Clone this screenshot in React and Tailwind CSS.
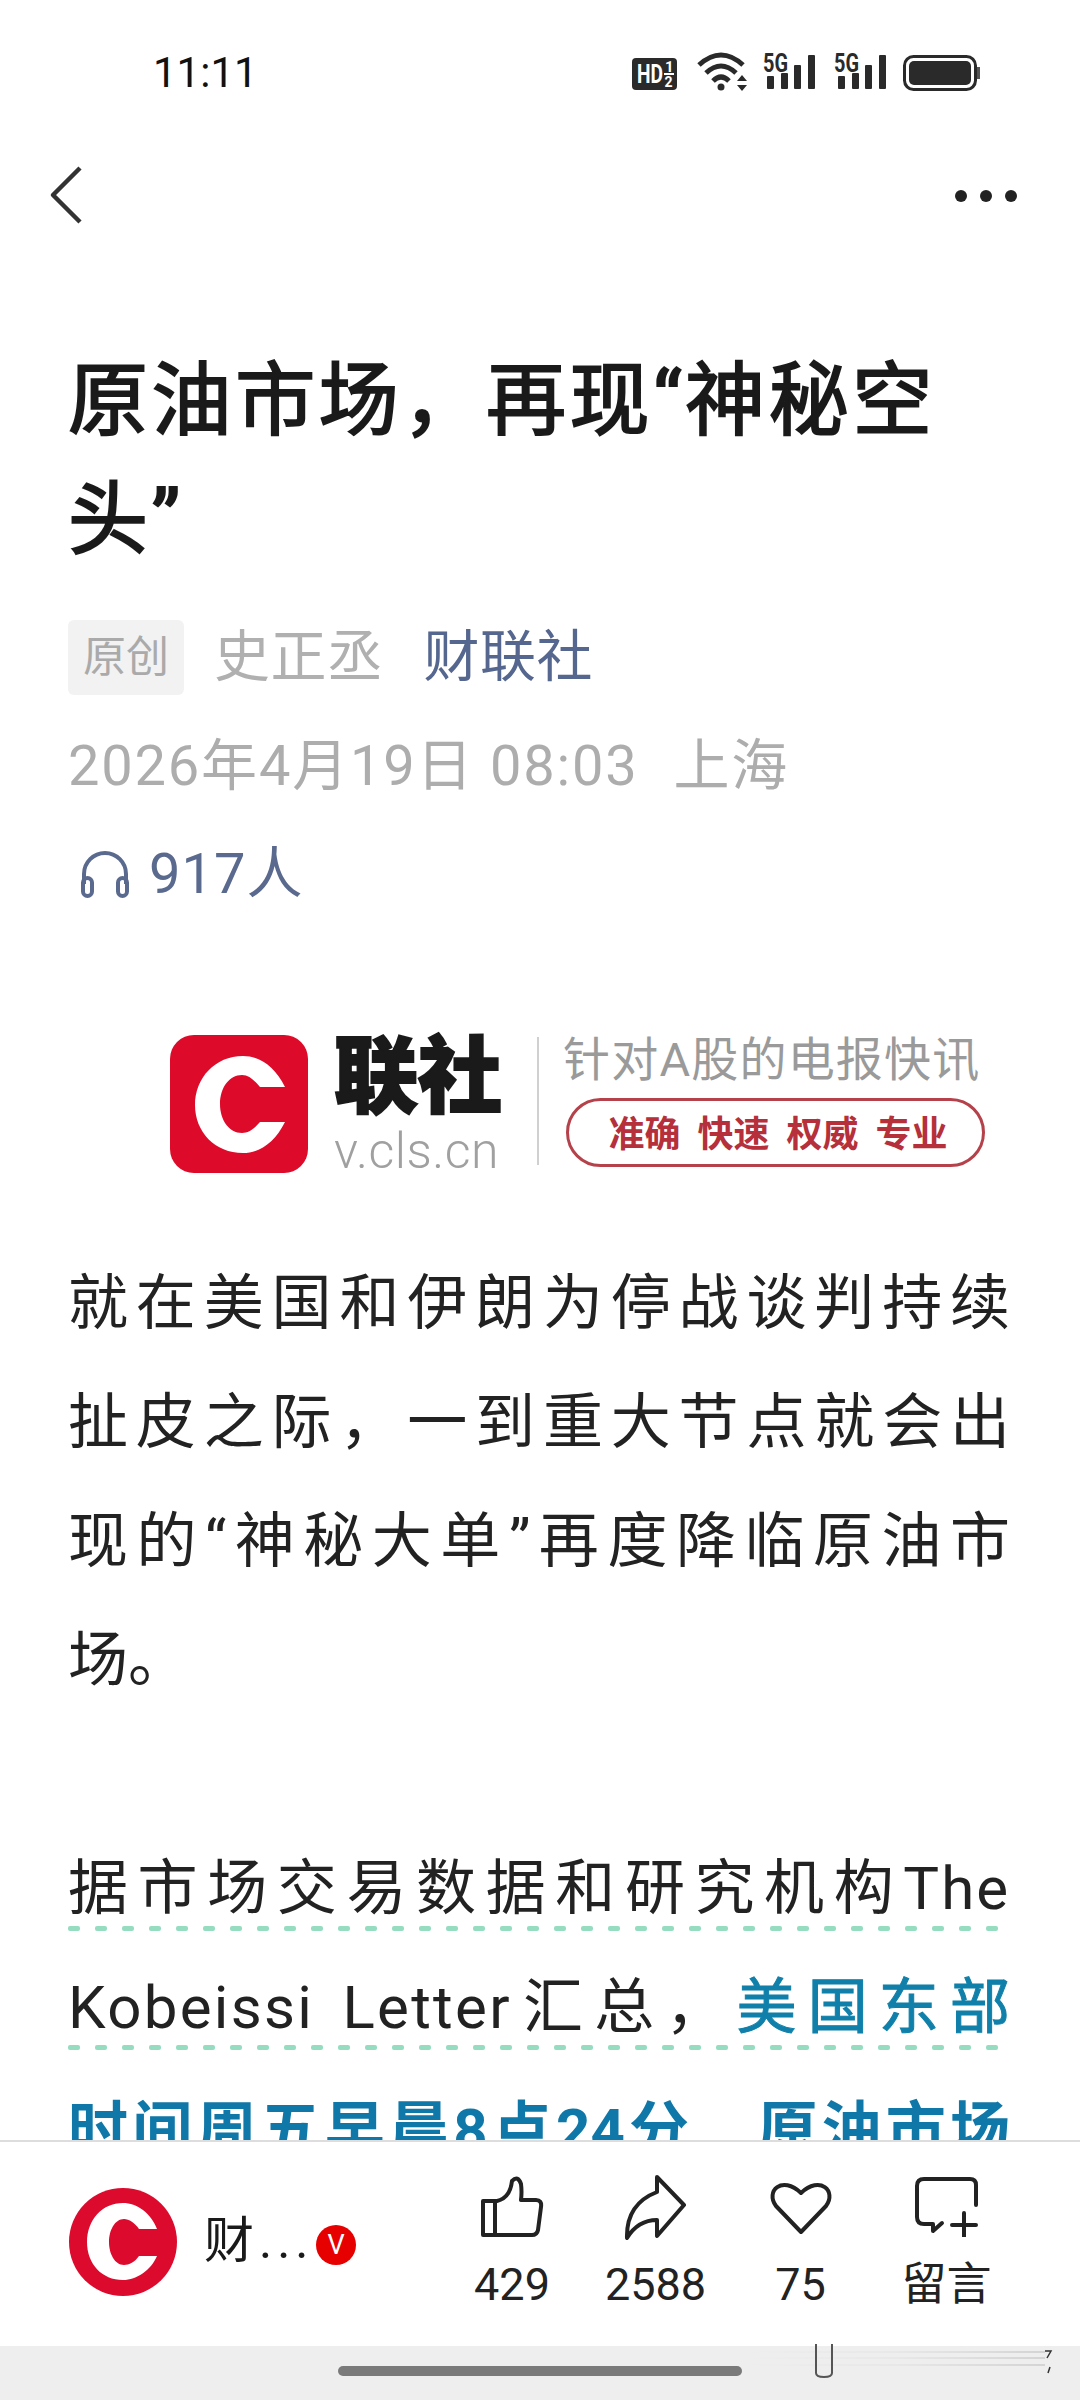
const F = '"Roboto","Noto Sans CJK SC",sans-serif';

function StatusIcons() {
  return (
    <svg width="350" height="44" viewBox="0 0 350 44" className="block">
      <rect x="2" y="8" width="45" height="32" rx="4" fill="#2a2a2a" />
      <text x="7" y="33" fontFamily="Roboto" fontWeight="700" fontSize="26" fill="#fff" textLength="26" lengthAdjust="spacingAndGlyphs">HD</text>
      <text x="35" y="22" fontFamily="Roboto" fontWeight="700" fontSize="15" fill="#fff">1</text>
      <rect x="34" y="23" width="10" height="2" fill="#fff" />
      <text x="34.5" y="37" fontFamily="Roboto" fontWeight="700" fontSize="14" fill="#fff">2</text>
      <g fill="none" stroke="#2a2a2a" strokeWidth="5">
        <path d="M69 15 Q91 -5 113 15" />
        <path d="M76 23 Q91 9 106 23" />
        <path d="M83 31 Q91 23 99 31" />
      </g>
      <circle cx="91" cy="37" r="3.5" fill="#2a2a2a" />
      <path d="M107 31h10l-5-6zM107 35h10l-5 6z" fill="#2a2a2a" />
      {[0, 71].map((dx) => (
        <g key={dx} transform={`translate(${dx} 0)`}>
          <text x="133" y="22" fontFamily="Roboto" fontWeight="700" fontSize="25" fill="#2a2a2a" textLength="25" lengthAdjust="spacingAndGlyphs">5G</text>
          <rect x="137" y="26" width="7" height="13" rx="1" fill="#2a2a2a" />
          <rect x="151" y="23" width="7" height="16" rx="1" fill="#2a2a2a" />
          <rect x="164" y="15" width="7" height="24" rx="1" fill="#2a2a2a" />
          <rect x="178" y="5" width="7" height="34" rx="1" fill="#2a2a2a" />
        </g>
      ))}
      <rect x="274.5" y="6.5" width="71" height="33" rx="9" fill="none" stroke="#2a2a2a" strokeWidth="3" />
      <rect x="279" y="11" width="62" height="24" rx="5" fill="#2a2a2a" />
      <rect x="347" y="17" width="3" height="12" fill="#555" />
    </svg>
  );
}

function Dashes({ n }) {
  return (
    <div className="absolute left-0 top-[97px] flex gap-[15px]">
      {Array.from({ length: n }).map((_, i) => (
        <span key={i} className="block w-[12px] h-[5px] rounded-[2px] bg-[#96dcc0]" />
      ))}
    </div>
  );
}

function Line({ children, dashed }) {
  return (
    <div className="relative h-[119px] flex items-center">
      <div className="w-[942px] whitespace-nowrap [text-align:justify] [text-align-last:justify]">{children}</div>
      {dashed && <Dashes n={dashed} />}
    </div>
  );
}

function BoxMark() {
  return (
    <svg viewBox="0 0 138 138" className="w-[138px] h-[138px] block shrink-0">
      <rect width="138" height="138" rx="24" fill="#dd0a2a" />
      <path
        fill="#fff"
        d="M115 52 C105 32 90 21 73 21 C45 21 25 43 25 70 C25 97 45 118 73 118 C90 118 105 107 115 87 L90 87 C84 94 79 98 72 98 C59 98 50 85 50 69 C50 53 59 40 72 40 C79 40 84 45 90 52 Z"
      />
    </svg>
  );
}

function RoundMark() {
  return (
    <svg viewBox="0 0 108 108" className="ml-[69px] mt-[46px] w-[108px] h-[108px] shrink-0">
      <circle cx="54" cy="54" r="54" fill="#dc0a2d" />
      <path
        fill="#fff"
        d="M88 41 C82 25 68 15 54 15 C33 15 18 32 18 54 C18 76 33 92 54 92 C68 92 82 82 88 68 L70 68 C66 74 60 77 55 77 C46 77 40 66 40 54 C40 42 46 31 55 31 C60 31 66 35 70 41 Z"
      />
    </svg>
  );
}

export default function App() {
  return (
    <div className="relative w-[1080px] h-[2400px] flex flex-col overflow-hidden bg-white" style={{ fontFamily: F }}>
      <main className="flex-1 min-h-0 overflow-hidden">
        <div className="h-[150px] pt-[50px] flex items-start justify-between pl-[153px] pr-[100px]">
          <span className="text-[42px] leading-[46px] text-[#111]">11:11</span>
          <StatusIcons />
        </div>

        <div className="flex items-center justify-between pl-[48px] pr-[63px] h-[90px]">
          <svg width="36" height="60" viewBox="0 0 36 60" fill="none" stroke="#333" strokeWidth="4.5" strokeLinejoin="round">
            <path d="M32 3 L5 30 L32 57" />
          </svg>
          <div className="flex gap-[13px] mt-[2px]">
            <span className="w-[12px] h-[12px] rounded-full bg-[#222]" />
            <span className="w-[12px] h-[12px] rounded-full bg-[#222]" />
            <span className="w-[12px] h-[12px] rounded-full bg-[#222]" />
          </div>
        </div>

        <h1 className="mt-[102px] pl-[68px] text-[80px] leading-[119px] font-normal text-[#1a1a1a] tracking-[3.6px] [-webkit-text-stroke:2px_#1a1a1a]">
          <div className="whitespace-nowrap">原油市场，再现“神秘空</div>
          <div>头”</div>
        </h1>

        <div className="mt-[39px] pl-[68px] flex items-center h-[76px]">
          <span className="w-[116px] h-[75px] rounded-[6px] bg-[#f2f2f2] text-[#aaaaaa] text-[43px] flex items-center justify-center">原创</span>
          <span className="ml-[30px] text-[56px] tracking-[0.5px] text-[#b0b0b0]">史正丞</span>
          <span className="ml-[40px] text-[56px] tracking-[0.5px] text-[#56678f]">财联社</span>
        </div>

        <div className="mt-[33px] pl-[68px] text-[56px] leading-[76px] tracking-[1.8px] text-[#adadad] whitespace-nowrap">
          2026年4月19日 08:03<span className="ml-[35px]">上海</span>
        </div>

        <div className="mt-[35px] pl-[80px] flex items-center gap-[19px] text-[56px] leading-[70px] tracking-[1px] text-[#5a6a8e]">
          <svg width="50" height="48" viewBox="0 0 50 48" fill="none" stroke="#5a6a8e" strokeWidth="4">
            <path d="M4 34 V24 A21 21 0 0 1 46 24 V34" />
            <rect x="3" y="28" width="9" height="18" rx="4.5" />
            <rect x="38" y="28" width="9" height="18" rx="4.5" />
          </svg>
          <span>917人</span>
        </div>

        <div className="mt-[126px] ml-[170px] flex h-[138px]">
          <BoxMark />
          <div className="ml-[26px] w-[172px] flex flex-col">
            <div className="text-[84px] leading-[86px] font-black text-[#1a1a1a] whitespace-nowrap [-webkit-text-stroke:2px_#1a1a1a]">联社</div>
            <div className="mt-[8px] text-[50px] leading-[44px] font-light tracking-[0.5px] text-[#a0a0a0] whitespace-nowrap">v.cls.cn</div>
          </div>
          <div className="ml-[31px] w-[2px] h-[128px] mt-[2px] bg-[#d0d0d0]" />
          <div className="ml-[24px] flex flex-col">
            <div className="text-[47px] leading-[50px] text-[#9a9a9a] tracking-[1.2px] whitespace-nowrap">针对A股的电报快讯</div>
            <div className="mt-[13px] ml-[3px] w-[419px] h-[69px] rounded-full border-[3px] border-[#b5414a] flex items-center justify-center gap-[17px] pl-[5px] pt-[4px] text-[36px] font-bold text-[#b5303a]">
              <span>准确</span><span>快速</span><span>权威</span><span>专业</span>
            </div>
          </div>
        </div>

        <article className="mt-[71px] pl-[68px] text-[60px] text-[#222]">
          <Line>就在美国和伊朗为停战谈判持续</Line>
          <Line>扯皮之际，一到重大节点就会出</Line>
          <Line>现的“神秘大单”再度降临原油市</Line>
          <div className="h-[119px] flex items-center">场。</div>
          <div className="h-[109px]" />
          <Line dashed={35}>据市场交易数据和研究机构<span className="tracking-[2px]">The</span></Line>
          <Line dashed={35}>
            <span className="tracking-[2.3px]">Kobeissi Letter</span>汇总，<span className="text-[#1080aa] [-webkit-text-stroke:1px_#1080aa]">美国东部</span>
          </Line>
          <div className="w-[942px] h-[119px] pt-[8px] flex items-center whitespace-nowrap [text-align-last:justify] font-bold text-[#1078a8]">
            <div className="w-full">时间周五早晨8点24分<span className="relative top-[16px]">，</span>原油市场</div>
          </div>
        </article>
      </main>

      <footer className="shrink-0 h-[206px] border-t-2 border-[#dddddd] bg-white flex items-start">
        <RoundMark />
        <span className="ml-[27px] mt-[64px] w-[112px] text-[50px] leading-[70px] text-[#1a1a1a] tracking-[5px] whitespace-nowrap">财...</span>
        <span className="mt-[83px] w-[40px] h-[40px] rounded-full bg-[#e60000] text-white text-[27px] leading-[40px] text-center">V</span>
        <div className="ml-[85px] mt-[32px] flex">
          <Action label="429" w="w-[142px]">
            <svg width="64" height="62" viewBox="0 0 64 62" fill="none" stroke="#222" strokeWidth="4" strokeLinejoin="round">
              <path d="M3 25 H17 Q30 22 32 5 Q38 -1 41 8 Q42 16 41 24 H56 Q62 24 61 31 L58 54 Q57 59 52 59 H3 Z" />
              <path d="M15 25 V59" />
            </svg>
          </Action>
          <Action label="2588" w="w-[145px]">
            <svg width="64" height="66" viewBox="0 0 64 66" fill="none" stroke="#222" strokeWidth="4" strokeLinejoin="round" strokeLinecap="round">
              <path d="M33 3 L60 31 L33 62 L33 46 Q14 46 3 64 Q2 30 33 18 Z" />
            </svg>
          </Action>
          <Action label="75" w="w-[145px]">
            <svg width="64" height="56" viewBox="0 0 64 56" fill="none" stroke="#222" strokeWidth="4" strokeLinejoin="round">
              <path d="M32 53 L7 27 C-4 12 13 -4 32 14 C51 -4 68 12 57 27 Z" />
            </svg>
          </Action>
          <Action label="留言" w="w-[147px]">
            <svg width="66" height="60" viewBox="0 0 66 60" fill="none" stroke="#222" strokeWidth="4" strokeLinecap="round" strokeLinejoin="round">
              <path d="M62 28 V8 Q62 2 56 2 H10 Q3 2 3 9 V40 Q3 47 10 47 H19 V54 L28 46" />
              <path d="M50 36 V60 M38 48 H62" />
            </svg>
          </Action>
        </div>
      </footer>

      <div className="shrink-0 h-[54px] bg-[#eeeeee] pt-[20px] pl-[338px] flex items-start">
        <div className="w-[404px] h-[10px] rounded-full bg-[#7a7a7a]" />
      </div>

      <svg className="absolute left-[745px] top-[2343px]" width="320" height="40" viewBox="0 0 320 40" fill="none">
        <defs>
          <linearGradient id="fade" x1="0" x2="1" y1="0" y2="0">
            <stop offset="0" stopColor="#eeeeee" />
            <stop offset="0.5" stopColor="#e8e8e8" />
            <stop offset="1" stopColor="#d4d4d4" />
          </linearGradient>
        </defs>
        <rect x="0" y="8" width="300" height="2" fill="url(#fade)" />
        <rect x="0" y="14" width="300" height="2" fill="url(#fade)" />
        <rect x="0" y="21" width="300" height="2" fill="url(#fade)" />
        <path d="M71 1 V30 Q71 34 79 34 Q87 34 87 30 V1" stroke="#555" strokeWidth="2" />
        <path d="M300 8 H306 L302 15 M305 24 L303 30" stroke="#333" strokeWidth="1.5" />
      </svg>
    </div>
  );
}

function Action({ label, w, children }) {
  return (
    <div className={`${w} flex flex-col items-center`}>
      <div className="h-[66px] flex items-center justify-center">{children}</div>
      <div className="mt-[20px] text-[45px] leading-[50px] text-[#222]">{label}</div>
    </div>
  );
}
